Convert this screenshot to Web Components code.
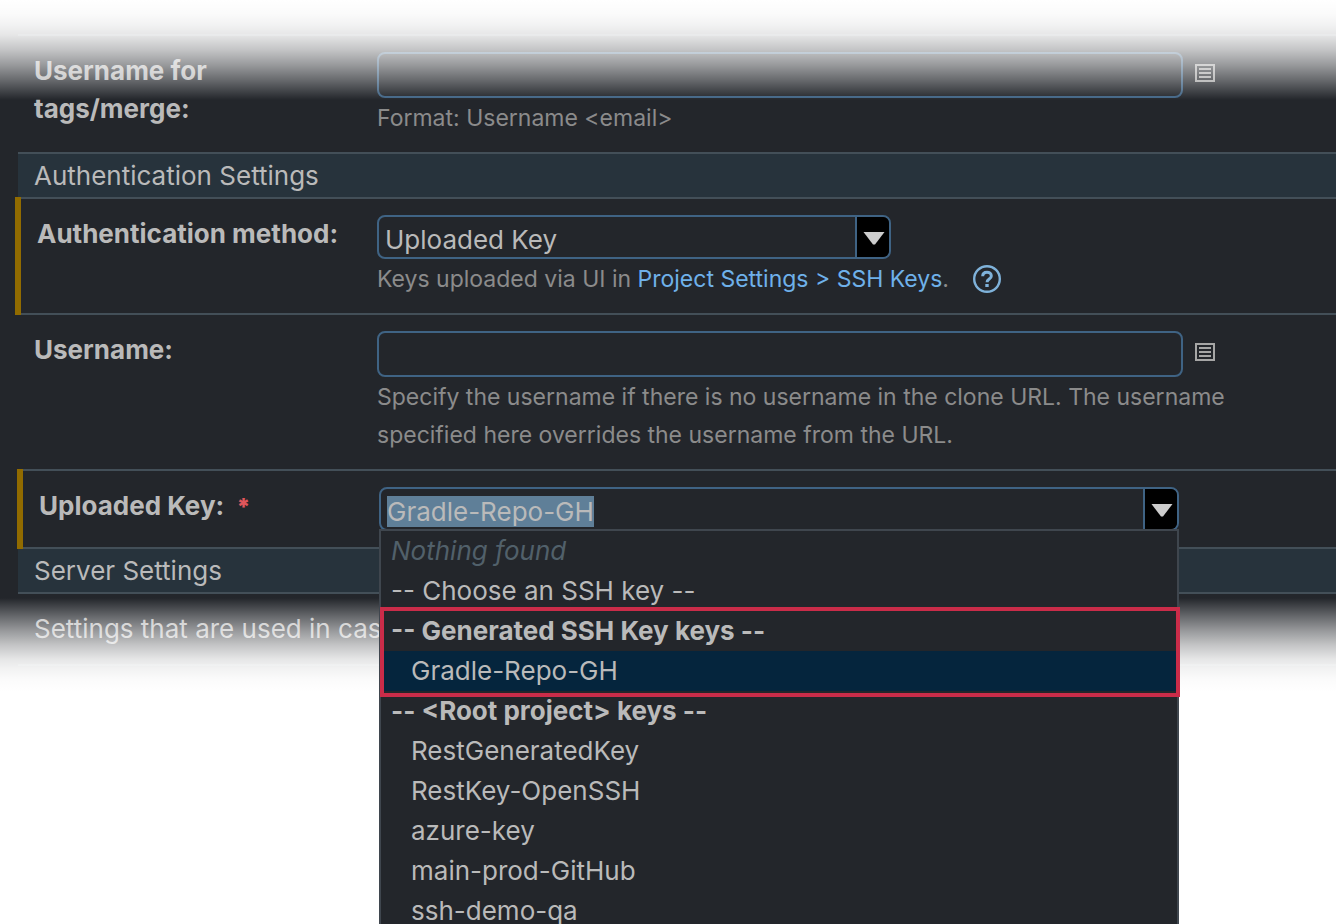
<!DOCTYPE html>
<html lang="en">
<head>
<meta charset="utf-8">
<meta name="viewport" content="width=device-width, initial-scale=1">
<title>VCS Root Settings</title>
<style>
  body { margin: 0; background: #fff; }
</style>
</head>
<body>
<vcs-settings></vcs-settings>

<script>
const define = (name, markup, setup) => {
  const template = document.createElement('template');
  template.innerHTML = markup;
  customElements.define(name, class extends HTMLElement {
    constructor() {
      super();
      this.attachShadow({ mode: 'open' }).append(template.content.cloneNode(true));
    }
    connectedCallback() { if (setup) setup(this, this.shadowRoot); }
  });
};

define('section-head', `
  <style>
    :host { display: block; background: #27333c; border-top: 2px solid #434f58; border-bottom: 2px solid #434f58;
      margin-top: -2px; padding: 0 16px; }
    h2 { margin: 0; font-size: 26px; font-weight: 400; line-height: 43px; }
  </style>
  <h2><slot></slot></h2>`);

define('setting-row', `
  <style>
    :host { display: grid; grid-template-columns: 343px minmax(0, 1fr); align-items: start; position: relative;
      padding: 16px 16px 15px; border-bottom: 2px solid #434f58; line-height: 38px; }
    :host([changed]) { grid-template-columns: 340px minmax(0, 1fr); margin-left: -3px; padding-left: 22px; }
    :host([changed][inset]) { margin-left: -1px; }
    :host([changed])::before { content: ""; position: absolute; left: 0; top: -2px; bottom: -2px; width: 6px;
      background: #916b00; z-index: 1; }
    .label { font-weight: 700; max-width: 310px; }
    .note { padding-top: 1px; font-size: 23px; color: #8b8b8b; }
  </style>
  <div class="label"><slot name="label"></slot></div>
  <div><slot></slot><div class="note"><slot name="note"></slot></div></div>`);

define('text-row', `
  <style>
    :host { display: block; padding: 16px; border-bottom: 2px solid #434f58; }
    p { margin: 0; line-height: 38px; }
  </style>
  <p><slot></slot></p>`);

define('text-field', `
  <style>
    :host { display: flex; gap: 12px; align-items: flex-start; }
    ::slotted(input) { box-sizing: border-box; flex: 0 1 806px; min-width: 0; height: 46px; padding: 0 8px;
      border: 2px solid #3f6384; border-radius: 8px; background: transparent; color: inherit; font: inherit; outline: none; }
    button { flex: none; display: block; margin: 12px 0 0; padding: 0; border: 0; background: none; color: #a6a6a6; }
    svg { display: block; }
  </style>
  <slot></slot>
  <button type="button" aria-label="Insert parameter">
    <svg width="20" height="18" viewBox="0 0 20 18" fill="none" stroke="currentColor" stroke-width="2">
      <path d="M1 1h18v16H1zM4 5h12M4 9h12M4 13h12"/>
    </svg>
  </button>`);

define('combo-box', `
  <style>
    :host { display: block; position: relative; max-width: 514px; }
    :host([wide]) { max-width: 800px; }
    .box { display: flex; box-sizing: border-box; height: 44px; border: 2px solid #3f6384; border-radius: 8px; overflow: hidden; }
    ::slotted(input) { flex: 1; min-width: 0; box-sizing: border-box; height: 40px; padding: 4px 6px 0; border: 0;
      background: transparent; color: inherit; font: inherit; line-height: 32px; outline: none; caret-color: transparent; }
    button { flex: none; width: 34px; padding: 0; border: 0; border-left: 2px solid #3f6384; background: #000; display: grid;
      place-items: center; }
    svg { display: block; }
  </style>
  <div class="box">
    <slot></slot>
    <button type="button" aria-label="Show options">
      <svg width="24" height="18" viewBox="0 0 24 18"><path d="M2.500 4h21L14 16.500h-2z" fill="#cdcdcd"/></svg>
    </button>
  </div>
  <slot name="list"></slot>`);

define('option-list', `
  <style>
    :host { display: block; position: absolute; left: 0; right: 0; top: 42px; z-index: 5; box-sizing: border-box;
      background: #23262b; border: 2px solid #3f464e; line-height: 40px; }
  </style>
  <div role="listbox" aria-label="SSH keys"><slot></slot></div>`);

define('option-item', `
  <style>
    :host { display: block; padding: 0 10px; white-space: nowrap; }
    :host([empty]) { font-style: italic; color: #51606a; }
    :host([heading]) { font-weight: 700; }
    :host([nested]) { padding-left: 30px; }
    :host([current]) { background: #05253d; }
  </style>
  <slot></slot>`, host => host.setAttribute('role', host.hasAttribute('heading') ? 'presentation' : 'option'));

define('option-frame', `
  <style>
    :host { display: block; position: relative; }
    :host::after { content: ""; position: absolute; inset: -4px -3px -6px -1px; border: 4px solid #ca2c49;
      pointer-events: none; z-index: 1; }
  </style>
  <slot></slot>`);

define('help-button', `
  <style>
    :host { display: inline-block; vertical-align: -6px; height: 28px; margin-left: 18px; }
    button { display: block; padding: 0; border: 0; background: none; color: #7fb2da; }
    svg { display: block; }
  </style>
  <button type="button" aria-label="Help">
    <svg width="28" height="28" viewBox="0 0 28 28" fill="none" stroke="currentColor">
      <circle cx="14" cy="14" r="12.800" stroke-width="2.400"/>
      <path d="M9.700 11.200c0-2.500 1.800-4 4.300-4s4.300 1.500 4.300 3.700c0 3.200-4.200 3.100-4.200 6.300" stroke-width="3"/>
      <path d="M14 19v3" stroke-width="3.400"/>
    </svg>
  </button>`);

define('vcs-settings', `
  <style>
    :host { display: block; position: relative; box-sizing: border-box; min-height: 100vh; overflow: hidden;
      font: 26px/38px Inter, "Liberation Sans", sans-serif; color: #bababa; }
    form { position: relative; padding: 34px 0 26px 18px; background: #23262b; }
    .rows { border-top: 2px solid #434f58; }
    .fade { position: absolute; left: 0; right: 0; pointer-events: none; z-index: 2; }
    .top { top: 0; height: 100px; background: linear-gradient(#fff 0%, #fffffffa 14%, #fffffff0 25%, #ffffffe2 35%,
      #ffffffba 50%, #ffffff88 65%, #ffffff50 80%, #ffffff20 92%, #fff0 100%); }
    .bottom { bottom: 0; height: 94px; background: linear-gradient(#fff0 0%, #ffffff20 8%, #ffffff50 20%, #ffffff88 35%,
      #ffffffba 50%, #ffffffe2 65%, #fffffff0 75%, #fffffffa 86%, #fff 100%); }
    a { color: #6fb1ea; text-decoration: none; }
    .required { color: #e0565b; margin-left: 6px; font-size: 23px; font-weight: 900; }
    input::selection { background: #5f7f98; color: #bababa; }
    setting-row[inset] combo-box { z-index: 3; }
  </style>
  <form>
    <div class="rows">
      <setting-row>
        <label slot="label" for="tags">Username for<br>tags/merge:</label>
        <text-field><input id="tags" type="text"></text-field>
        <span slot="note">Format: Username &lt;email&gt;</span>
      </setting-row>
      <section-head>Authentication Settings</section-head>
      <setting-row changed>
        <label slot="label" for="method">Authentication method:</label>
        <combo-box><input id="method" type="text" role="combobox" aria-expanded="false" value="Uploaded Key"></combo-box>
        <span slot="note">Keys uploaded via UI in <a href="#ssh-keys">Project Settings &gt; SSH Keys</a>. <help-button></help-button></span>
      </setting-row>
      <setting-row>
        <label slot="label" for="user">Username:</label>
        <text-field><input id="user" type="text"></text-field>
        <span slot="note">Specify the username if there is no username in the clone URL. The username specified here overrides the username from the URL.</span>
      </setting-row>
      <setting-row changed inset>
        <label slot="label" for="key">Uploaded Key: <span class="required">*</span></label>
        <combo-box wide>
          <input id="key" type="text" role="combobox" aria-expanded="true" value="Gradle-Repo-GH">
          <option-list slot="list">
            <option-item empty>Nothing found</option-item>
            <option-item>-- Choose an SSH key --</option-item>
            <option-frame>
              <option-item heading>-- Generated SSH Key keys --</option-item>
              <option-item nested current>Gradle-Repo-GH</option-item>
            </option-frame>
            <option-item heading>-- &lt;Root project&gt; keys --</option-item>
            <option-item nested>RestGeneratedKey</option-item>
            <option-item nested>RestKey-OpenSSH</option-item>
            <option-item nested>azure-key</option-item>
            <option-item nested>main-prod-GitHub</option-item>
            <option-item nested>ssh-demo-qa</option-item>
          </option-list>
        </combo-box>
      </setting-row>
      <section-head>Server Settings</section-head>
      <text-row>Settings that are used in cas</text-row>
    </div>
    <div class="fade top"></div>
    <div class="fade bottom"></div>
  </form>`, (host, root) => {
    const key = root.getElementById('key');
    key.focus({ preventScroll: true });
    key.select();
  });
</script>
</body>
</html>
